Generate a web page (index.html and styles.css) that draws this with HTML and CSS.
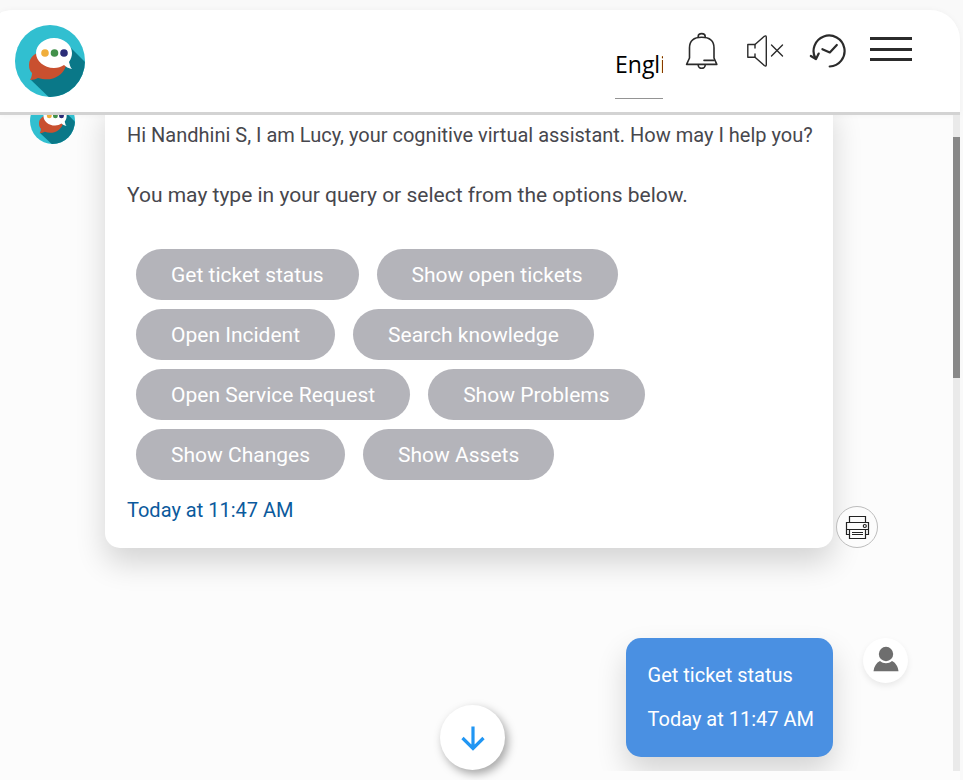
FILE: index.html
```html
<!DOCTYPE html>
<html lang="en">
<head>
    <meta charset="UTF-8">
    <meta name="viewport" content="width=device-width, initial-scale=1">
    <title>Lucy</title>
    <link rel="stylesheet" href="styles.css">
</head>
<body>
<!-- bot logo, used in the header and next to the messages -->
<svg class="defs" width="0" height="0" aria-hidden="true">
    <defs>
        <clipPath id="round"><ellipse cx="35" cy="36" rx="35" ry="36"/></clipPath>
        <symbol id="lucy" viewBox="0 0 70 72" preserveAspectRatio="none">
            <g clip-path="url(#round)">
                <rect width="70" height="72" fill="#31bfd0"/>
                <path d="M55 22L80 47V80H42L16 55Z" fill="#0a7888"/>
                <path d="M32 26c-11 0-18 6-18 14 0 4 1 6 3 8 0 3-1 5-2 7 3 0 6-1 8-2 13 4 24-1 28-12z" fill="#c9502f"/>
                <path d="M39 13c-10 0-18 7-18 15s8 15 18 15c4 0 7-1 10-3 2 2 4 3 8 4-2-2-2-4-3-7 2-3 3-6 3-9 0-8-8-15-18-15z" fill="#fff"/>
                <circle cx="30" cy="28" r="3.8" fill="#f0ae3c"/>
                <circle cx="39.5" cy="28" r="3.8" fill="#43914b"/>
                <circle cx="49" cy="28" r="3.8" fill="#2b2d78"/>
            </g>
        </symbol>
    </defs>
</svg>

<div class="shell">
    <header class="header">
        <svg class="logo" role="img" aria-label="Lucy"><use href="#lucy"/></svg>
        <div class="nav">
            <select class="lang" aria-label="Language">
                <option>English</option>
                <option>Deutsch</option>
            </select>
            <button class="icon" type="button" aria-label="Notifications">
                <svg width="39" height="40" viewBox="0 0 39 40" stroke-width="1.6">
                    <path d="M13.2 6.3v-.8a3.5 2.9 0 0 1 7 0v.8"/>
                    <path d="M4.5 27V17C4.5 8.8 10 6.3 16.7 6.3S29 8.8 29 17v10l2.8 6.4H1.6z"/>
                    <path d="M13.2 34a3.5 3.3 0 0 0 7 0M19 29.4h10"/>
                </svg>
            </button>
            <button class="icon" type="button" aria-label="Unmute">
                <svg width="40" height="40" viewBox="0 0 40 40" stroke-width="1.4">
                    <path d="M9 17v-3.5H1.8v12.8H9V23"/>
                    <path d="M9 13.5l9.3-8.2q2-1.2 2 .9v27.6q0 2-2 .7L9 26.3"/>
                    <path d="M25.5 14l11 11M36.5 14l-11 11"/>
                </svg>
            </button>
            <button class="icon" type="button" aria-label="History">
                <svg width="38" height="40" viewBox="0 0 38 40" stroke-width="2.2">
                    <path d="M21.7 35.5A15.5 15.5 0 1 0 7.5 27.5"/>
                    <path d="M2.8 25l5.2 3 2.7-5.4M14.4 18.2l7.4 3.2 7-7.4"/>
                </svg>
            </button>
            <button class="icon" type="button" aria-label="Menu">
                <svg width="44" height="40" viewBox="0 0 44 40">
                    <path d="M2 6h42v3H2zM2 17h42v3H2zM2 27h42v3H2z" fill="#2b2b2b" stroke="none"/>
                </svg>
            </button>
        </div>
    </header>

    <main class="chat">
        <div class="messages">
            <div class="row">
                <svg class="avatar" role="img" aria-label="Lucy"><use href="#lucy"/></svg>
                <div class="card">
                    <p class="line">Hi Nandhini S, I am Lucy, your cognitive virtual assistant. How may I help you?</p>
                    <p class="line hint">You may type in your query or select from the options below.</p>
                    <div class="options">
                        <button type="button">Get ticket status</button>
                        <button type="button">Show open tickets</button>
                        <button type="button">Open Incident</button>
                        <button type="button">Search knowledge</button>
                        <button type="button">Open Service Request</button>
                        <button type="button">Show Problems</button>
                        <button type="button">Show Changes</button>
                        <button type="button">Show Assets</button>
                    </div>
                    <p class="line time">Today at 11:47 AM</p>
                </div>
                <div class="side side-end">
                    <button class="print" type="button" aria-label="Print">
                        <svg width="26" height="26" viewBox="0 0 26 26">
                            <path d="M5.5 8V2.5h16V8M2.5 8.5h22v7h-22zM2.5 15.5v5h3M24.5 15.5v5h-3M5.5 15.5h16v9h-16z"/>
                            <path d="M8 18.5h11M8 20.5h11" stroke-width="1"/>
                            <circle cx="20.8" cy="12" r="1.5"/>
                        </svg>
                    </button>
                </div>
            </div>

            <div class="row row-user">
                <div class="bubble">
                    <p class="line">Get ticket status</p>
                    <p class="line">Today at 11:47 AM</p>
                </div>
                <div class="side">
                    <div class="user">
                        <svg width="26" height="26" viewBox="0 0 26 26" role="img" aria-label="You">
                            <circle cx="13" cy="8" r="7.2"/>
                            <path d="M.5 25.3c.5-5 3-8.6 6.5-10.3 3.5 3 8.5 3 12 0 3.5 1.7 6 5.3 6.5 10.3z"/>
                        </svg>
                    </div>
                </div>
            </div>
        </div>
        <div class="track"><div class="thumb"></div></div>
    </main>

    <button class="down" type="button" aria-label="Scroll down">
        <svg width="26" height="26" viewBox="0 0 26 26">
            <path d="M13 1.5v22M2.5 13L13 23.5 23.5 13"/>
        </svg>
    </button>
</div>
</body>
</html>
```

FILE: styles.css
```css
* {
    box-sizing: border-box;
    margin: 0;
    padding: 0;
}

body {
    padding: 10px 3px 0 0;
    background: #f9f9f9;
    color: #47474d;
    font-family: Roboto, "Liberation Sans", sans-serif;
    font-size: 20px;
    line-height: 30px;
}

button {
    border: 0;
    background: none;
    font: inherit;
    cursor: pointer;
}

svg {
    display: block;
}

.defs {
    position: absolute;
}

.shell {
    position: relative;
    display: flex;
    flex-direction: column;
    height: calc(100vh - 10px);
    padding-bottom: 9px;
    border-radius: 15px 30px 0 0 / 4px 30px 0 0;
    background: #fcfcfc;
}

/* header */
.header {
    display: flex;
    justify-content: space-between;
    flex-shrink: 0;
    padding: 15px 48px 13px 15px;
    border-bottom: 3px solid #d3d3d3;
    border-radius: 15px 30px 0 0 / 4px 30px 0 0;
    background: #fff;
    box-shadow: 0 0 6px rgba(0, 0, 0, .04);
}

.logo {
    width: 70px;
    height: 72px;
}

.nav {
    display: flex;
    align-items: flex-start;
    gap: 22px;
    padding-top: 6px;
}

.lang {
    width: 48px;
    height: 68px;
    padding-bottom: 2px;
    border: 0;
    border-bottom: 1px solid #949494;
    border-radius: 0;
    background: transparent;
    color: #000;
    font: 23px "Open Sans", "Noto Sans", sans-serif;
    appearance: none;
}

.icon svg {
    fill: none;
    stroke: #2b2b2b;
    stroke-linecap: round;
    stroke-linejoin: round;
}

/* chat */
.chat {
    display: flex;
    flex: 1;
    min-height: 0;
}

.messages {
    display: flex;
    flex: 1;
    flex-direction: column;
    justify-content: flex-end;
    gap: 90px;
    padding-bottom: 14px;
    overflow: hidden;
}

.row {
    display: flex;
    flex-shrink: 0;
    padding: 0 45px 0 30px;
}

.row-user {
    justify-content: flex-end;
}

.avatar {
    flex-shrink: 0;
    width: 45px;
    height: 46px;
    margin-right: 30px;
}

.card,
.bubble {
    padding: 22px 19px 23px 22px;
    border-radius: 15px;
    box-shadow: 0 15px 30px rgba(0, 0, 0, .16);
}

.card {
    flex: 1;
    background: #fff;
}

.hint {
    margin-top: 30px;
    font-size: 21px;
}

.options {
    display: flex;
    flex-wrap: wrap;
    gap: 9px 18px;
    margin: 39px 9px 15px;
}

.options button {
    height: 51px;
    padding: 0 35px;
    border-radius: 26px;
    background: #b4b4ba;
    color: #fff;
    font-size: 21px;
}

.time {
    color: #0b5a9d;
}

.bubble {
    background: #4a90e2;
    color: #fff;
}

.bubble .line + .line {
    margin-top: 14px;
}

.side {
    width: 75px;
    padding-left: 30px;
}

.side-end {
    align-self: flex-end;
    padding-left: 3px;
}

.print {
    display: flex;
    align-items: center;
    justify-content: center;
    width: 42px;
    height: 42px;
    border: 1px solid #bdbdbd;
    border-radius: 50%;
    background: #fcfcfc;
}

.print svg {
    fill: none;
    stroke: #222;
    stroke-width: 1.2;
}

.user {
    display: flex;
    align-items: flex-start;
    justify-content: center;
    width: 45px;
    height: 45px;
    padding-top: 8px;
    border-radius: 50%;
    background: #fff;
    box-shadow: 0 3px 6px rgba(0, 0, 0, .08);
}

.user svg {
    fill: #6e6e6e;
}

.track {
    width: 7px;
    padding-top: 22px;
    background: #eaeaea;
}

.thumb {
    height: 38%;
    background: #888;
}

/* floats over the messages */
.down {
    position: absolute;
    bottom: 10px;
    left: 50%;
    display: flex;
    align-items: center;
    justify-content: center;
    width: 65px;
    height: 65px;
    margin-left: -40px;
    border-radius: 50%;
    background: #fff;
    box-shadow: 3px 4px 10px rgba(0, 0, 0, .35);
}

.down svg {
    fill: none;
    stroke: #2196f3;
    stroke-width: 3.2;
}
```
